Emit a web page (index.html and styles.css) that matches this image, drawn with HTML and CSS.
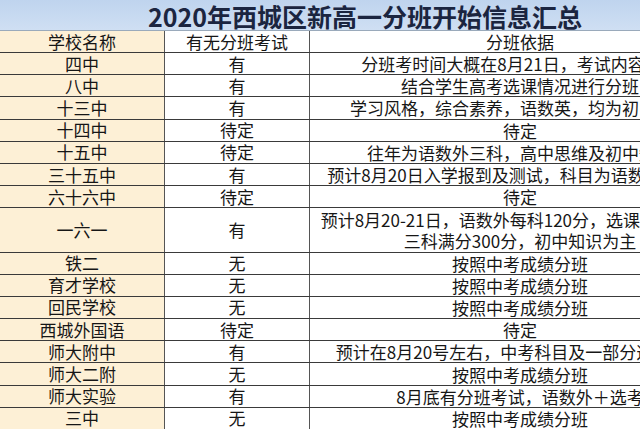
FILE: index.html
```html
<!DOCTYPE html>
<html lang="zh-CN">
<head>
<meta charset="utf-8">
<link rel="stylesheet" href="styles.css">
</head>
<body>
<div class="sheet">
  <div class="title">2020年西城区新高一分班开始信息汇总</div>
  <div class="row head"><div class="c1">学校名称</div><div class="c2">有无分班考试</div><div class="c3">分班依据</div></div>
  <div class="row"><div class="c1">四中</div><div class="c2">有</div><div class="c3">分班考时间大概在8月21日，考试内容待定</div></div>
  <div class="row"><div class="c1">八中</div><div class="c2">有</div><div class="c3">结合学生高考选课情况进行分班</div></div>
  <div class="row"><div class="c1">十三中</div><div class="c2">有</div><div class="c3">学习风格，综合素养，语数英，均为初中知识</div></div>
  <div class="row"><div class="c1">十四中</div><div class="c2">待定</div><div class="c3">待定</div></div>
  <div class="row"><div class="c1">十五中</div><div class="c2">待定</div><div class="c3">往年为语数外三科，高中思维及初中知识</div></div>
  <div class="row"><div class="c1">三十五中</div><div class="c2">有</div><div class="c3">预计8月20日入学报到及测试，科目为语数外及物化</div></div>
  <div class="row"><div class="c1">六十六中</div><div class="c2">待定</div><div class="c3">待定</div></div>
  <div class="row double"><div class="c1">一六一</div><div class="c2">有</div><div class="c3">预计8月20-21日，语数外每科120分，选课每科100分<br>三科满分300分，初中知识为主</div></div>
  <div class="row"><div class="c1">铁二</div><div class="c2">无</div><div class="c3">按照中考成绩分班</div></div>
  <div class="row"><div class="c1">育才学校</div><div class="c2">无</div><div class="c3">按照中考成绩分班</div></div>
  <div class="row"><div class="c1">回民学校</div><div class="c2">无</div><div class="c3">按照中考成绩分班</div></div>
  <div class="row"><div class="c1">西城外国语</div><div class="c2">待定</div><div class="c3">待定</div></div>
  <div class="row"><div class="c1">师大附中</div><div class="c2">有</div><div class="c3">预计在8月20号左右，中考科目及一部分选考科目</div></div>
  <div class="row"><div class="c1">师大二附</div><div class="c2">无</div><div class="c3">按照中考成绩分班</div></div>
  <div class="row"><div class="c1">师大实验</div><div class="c2">有</div><div class="c3">8月底有分班考试，语数外＋选考</div></div>
  <div class="row"><div class="c1">三中</div><div class="c2">无</div><div class="c3">按照中考成绩分班</div></div>
</div>
</body>
</html>
```
FILE: styles.css
```css
html, body {
  margin: 0;
  padding: 0;
  width: 640px;
  height: 429px;
  overflow: hidden;
  background: #ffffff;
}
.sheet {
  width: 730px;
  font-family: "Noto Sans CJK SC", "Noto Sans", sans-serif;
  color: #161616;
}
.title {
  height: 31px;
  box-sizing: border-box;
  background: linear-gradient(#bfd4ee, #cfdff3);
  border-bottom: 1px solid #9aaabb;
  text-align: center;
  font-size: 25px;
  font-weight: 700;
  line-height: 32px;
  color: #1b2540;
}
.row {
  display: grid;
  grid-template-columns: 165px 145px 420px;
  height: 22.2px;
  box-sizing: border-box;
  border-bottom: 1.4px solid #3a3a3a;
  font-size: 17px;
  line-height: 20px;
}
.row.head {
  height: 22px;
}
.row.double {
  height: 44.2px;
}
.row > div {
  display: flex;
  align-items: center;
  justify-content: center;
  white-space: nowrap;
  box-sizing: border-box;
}
.c1 {
  background: #fdf0d6;
  border-right: 1px solid #555555;
}
.c2 {
  border-right: 1px solid #555555;
}
.c3 {
  text-align: center;
  line-height: 21px;
}
```
